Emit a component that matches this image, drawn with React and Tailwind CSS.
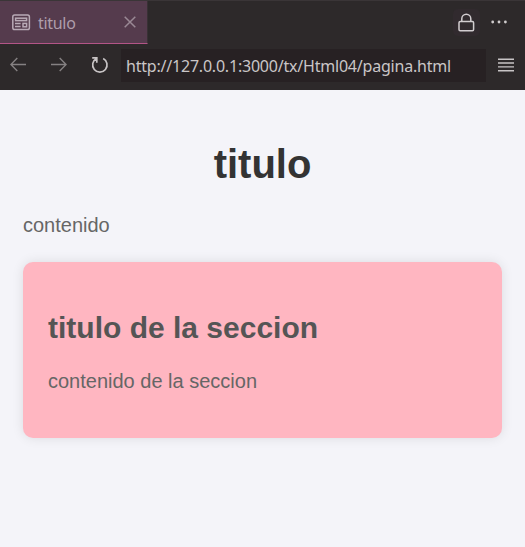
function PreviewIcon() {
  return (
    <svg className="ml-3 mt-px shrink-0" width="19" height="17" viewBox="0 0 19 17" fill="none" stroke="#b9aab6" strokeWidth="1.5">
      <rect x="0.8" y="1.1" width="16.6" height="14.4" rx="1.8" />
      <rect x="3.6" y="4.2" width="11" height="2.4" />
      <path d="M3 9.5h5.6M3 12.5h5.6" />
      <rect x="11" y="9.4" width="3.6" height="3.4" />
    </svg>
  );
}

function TabBar() {
  return (
    <div className="flex h-[44px] border-t border-[#3a3537]">
      <div className="flex h-[43px] w-[148px] items-center border-b border-r border-b-[#b35587] border-r-[#393135] bg-[#553b4d]">
        <PreviewIcon />
        <span className="ml-[7px] mt-px text-[16px] leading-5 tracking-[-0.3px] text-[#ae9eab]">titulo</span>
        <svg className="ml-auto mr-[11px]" width="12" height="12" viewBox="0 0 12 12" stroke="#9a8995" strokeWidth="1.5">
          <path d="M0.7 0.7l10.6 10.6M11.3 0.7L0.7 11.3" />
        </svg>
      </div>
      <div className="ml-auto flex items-start pt-2">
        <div className="flex h-[27px] w-[27px] items-center justify-center rounded-[5px] bg-[#312a2e]">
          <svg width="17" height="20" viewBox="0 0 17 20" fill="none" stroke="#d2cdd0" strokeWidth="1.5">
            <rect x="1" y="8.6" width="14.6" height="9.2" rx="1.2" />
            <path d="M3.8 8.6V5.8a4.5 4.5 0 0 1 9 0v2.8" />
          </svg>
        </div>
        <svg className="ml-[11px] mr-[17px] mt-[11px]" width="17" height="4" viewBox="0 0 17 4" fill="#d0cccd">
          <circle cx="1.7" cy="2" r="1.4" />
          <circle cx="8" cy="2" r="1.4" />
          <circle cx="14.4" cy="2" r="1.4" />
        </svg>
      </div>
    </div>
  );
}

function AddressBar() {
  return (
    <div className="flex h-[46px] items-start pt-[5px]">
      <svg className="ml-[10px] mt-[8px] shrink-0" width="16" height="15" viewBox="0 0 16 15" fill="none" stroke="#858182" strokeWidth="1.4">
        <path d="M16 7.5H1M7.3 1L0.9 7.5l6.4 6.5" />
      </svg>
      <svg className="ml-[25px] mt-[8px] shrink-0" width="16" height="15" viewBox="0 0 16 15" fill="none" stroke="#858182" strokeWidth="1.4">
        <path d="M0 7.5h15M8.7 1l6.4 6.5L8.7 14" />
      </svg>
      <svg className="ml-[24px] mt-[7px] shrink-0" width="18" height="18" viewBox="0 0 18 18" fill="none" stroke="#c8c4c5" strokeWidth="1.7">
        <path d="M1.2 1.9h4.6v4.8M5.5 2.5A7.2 7.2 0 1 0 12.2 2.5" />
      </svg>
      <div className="ml-[12px] flex h-[33px] w-[365px] shrink-0 items-center bg-[#272123] pl-[5px]">
        <span className="whitespace-nowrap text-[16px] leading-5 tracking-[-0.21px] text-[#cac6c7]">
          http://127.0.0.1:3000/tx/Html04/pagina.html
        </span>
      </div>
      <svg className="ml-[12px] mt-[9px] shrink-0" width="16" height="14" viewBox="0 0 16 14" stroke="#c8c4c5" strokeWidth="1.4">
        <path d="M0 1.3h16M0 5h16M0 8.9h16M0 12.8h16" />
      </svg>
    </div>
  );
}

export default function App() {
  return (
    <div className="flex h-[547px] w-[525px] flex-col overflow-hidden bg-[#f4f4f9]">
      <header className="h-[90px] shrink-0 bg-[#2d292a] font-['Noto_Sans',sans-serif]">
        <TabBar />
        <AddressBar />
      </header>
      <main className="px-[23px] pt-[51px] font-['Liberation_Sans',Arial,sans-serif]">
        <h1 className="text-center text-[40px] font-bold leading-[46px] text-[#333]">titulo</h1>
        <p className="mt-[27px] text-[20px] leading-[23px] text-[#666]">contenido</p>
        <section className="mt-[25px] h-[176px] rounded-[10px] bg-[#ffb6c1] px-[25px] pt-[48px] shadow-[0_0_12px_rgba(0,0,0,0.1)]">
          <h2 className="text-[30px] font-bold leading-[35px] text-[#555]">titulo de la seccion</h2>
          <p className="mt-[25px] text-[20px] leading-[23px] text-[#666]">contenido de la seccion</p>
        </section>
      </main>
    </div>
  );
}
